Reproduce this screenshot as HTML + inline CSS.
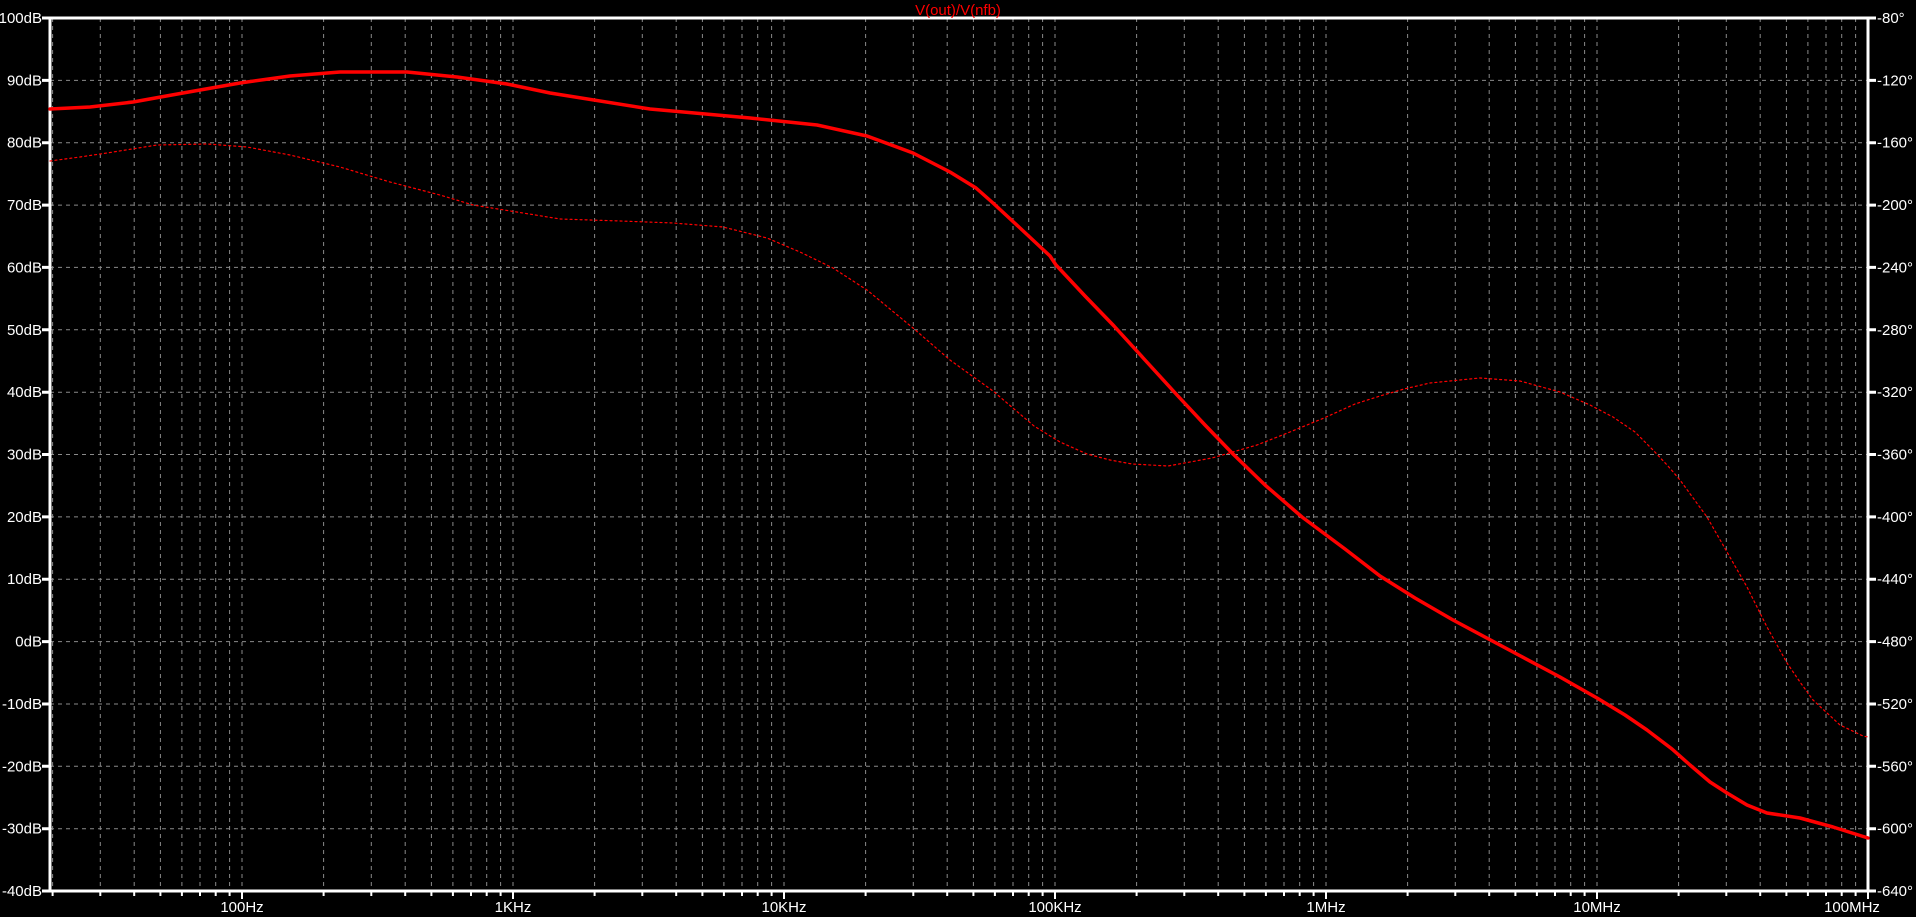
<!DOCTYPE html>
<html><head><meta charset="utf-8"><style>
html,body{margin:0;padding:0;background:#000;width:1916px;height:917px;overflow:hidden}
svg{display:block}
text{font-family:"Liberation Sans",Arial,sans-serif;font-size:15px;fill:#fff}
</style></head><body>
<svg width="1916" height="917" viewBox="0 0 1916 917">
<rect width="1916" height="917" fill="#000"/>
<g stroke="#8a8a8a" stroke-width="1" stroke-dasharray="4 4" fill="none">
<path d="M52.6 18V891M100.3 18V891M134.2 18V891M160.4 18V891M181.9 18V891M200 18V891M215.7 18V891M229.6 18V891M242 18V891
M323.6 18V891M371.3 18V891M405.2 18V891M431.4 18V891M452.9 18V891M471 18V891M486.7 18V891M500.6 18V891M513 18V891
M594.6 18V891M642.3 18V891M676.2 18V891M702.4 18V891M723.9 18V891M742 18V891M757.7 18V891M771.6 18V891M784 18V891
M865.6 18V891M913.3 18V891M947.2 18V891M973.4 18V891M994.9 18V891M1013 18V891M1028.7 18V891M1042.6 18V891M1055 18V891
M1136.6 18V891M1184.3 18V891M1218.2 18V891M1244.4 18V891M1265.9 18V891M1284 18V891M1299.7 18V891M1313.6 18V891M1326 18V891
M1407.6 18V891M1455.3 18V891M1489.2 18V891M1515.4 18V891M1536.9 18V891M1555 18V891M1570.7 18V891M1584.6 18V891M1597 18V891
M1678.6 18V891M1726.3 18V891M1760.2 18V891M1786.4 18V891M1807.9 18V891M1826 18V891M1841.7 18V891M1855.6 18V891
M50 80.4H1868M50 142.7H1868M50 205.1H1868M50 267.4H1868M50 329.8H1868M50 392.2H1868M50 454.5H1868M50 516.9H1868M50 579.2H1868M50 641.6H1868M50 704H1868M50 766.3H1868M50 828.7H1868"/>
</g>
<g stroke="#fff" stroke-width="3" fill="none">
<path d="M50 18H1868V891H50Z"/>
<path d="M42 18H50M42 80.4H50M42 142.7H50M42 205.1H50M42 267.4H50M42 329.8H50M42 392.2H50M42 454.5H50M42 516.9H50M42 579.2H50M42 641.6H50M42 704H50M42 766.3H50M42 828.7H50M42 891H50
M1868 18H1876M1868 80.4H1876M1868 142.7H1876M1868 205.1H1876M1868 267.4H1876M1868 329.8H1876M1868 392.2H1876M1868 454.5H1876M1868 516.9H1876M1868 579.2H1876M1868 641.6H1876M1868 704H1876M1868 766.3H1876M1868 828.7H1876M1868 891H1876"/>
<path stroke-width="2" d="M52.6 891v5M100.3 891v5M134.2 891v5M160.4 891v5M181.9 891v5M200 891v5M215.7 891v5M229.6 891v5M242 891v8
M323.6 891v5M371.3 891v5M405.2 891v5M431.4 891v5M452.9 891v5M471 891v5M486.7 891v5M500.6 891v5M513 891v8
M594.6 891v5M642.3 891v5M676.2 891v5M702.4 891v5M723.9 891v5M742 891v5M757.7 891v5M771.6 891v5M784 891v8
M865.6 891v5M913.3 891v5M947.2 891v5M973.4 891v5M994.9 891v5M1013 891v5M1028.7 891v5M1042.6 891v5M1055 891v8
M1136.6 891v5M1184.3 891v5M1218.2 891v5M1244.4 891v5M1265.9 891v5M1284 891v5M1299.7 891v5M1313.6 891v5M1326 891v8
M1407.6 891v5M1455.3 891v5M1489.2 891v5M1515.4 891v5M1536.9 891v5M1555 891v5M1570.7 891v5M1584.6 891v5M1597 891v8
M1678.6 891v5M1726.3 891v5M1760.2 891v5M1786.4 891v5M1807.9 891v5M1826 891v5M1841.7 891v5M1855.6 891v5M1868 891v8"/>
</g>
<g text-anchor="end">
<text x="42" y="23">100dB</text><text x="42" y="85.4">90dB</text><text x="42" y="147.7">80dB</text><text x="42" y="210.1">70dB</text><text x="42" y="272.4">60dB</text><text x="42" y="334.8">50dB</text><text x="42" y="397.2">40dB</text><text x="42" y="459.5">30dB</text><text x="42" y="521.9">20dB</text><text x="42" y="584.2">10dB</text><text x="42" y="646.6">0dB</text><text x="42" y="709">-10dB</text><text x="42" y="771.3">-20dB</text><text x="42" y="833.7">-30dB</text><text x="42" y="896">-40dB</text>
</g>
<g>
<text x="1877" y="23">-80°</text><text x="1877" y="85.4">-120°</text><text x="1877" y="147.7">-160°</text><text x="1877" y="210.1">-200°</text><text x="1877" y="272.4">-240°</text><text x="1877" y="334.8">-280°</text><text x="1877" y="397.2">-320°</text><text x="1877" y="459.5">-360°</text><text x="1877" y="521.9">-400°</text><text x="1877" y="584.2">-440°</text><text x="1877" y="646.6">-480°</text><text x="1877" y="709">-520°</text><text x="1877" y="771.3">-560°</text><text x="1877" y="833.7">-600°</text><text x="1877" y="896">-640°</text>
</g>
<g text-anchor="middle">
<text x="242" y="912">100Hz</text><text x="513" y="912">1KHz</text><text x="784" y="912">10KHz</text><text x="1055" y="912">100KHz</text><text x="1326" y="912">1MHz</text><text x="1597" y="912">10MHz</text><text x="1852" y="912">100MHz</text>
</g>
<text x="958" y="15" text-anchor="middle" style="fill:#ff0000;font-size:15px">V(out)/V(nfb)</text>
<g fill="none" stroke="#ff0000" stroke-linejoin="round" stroke-linecap="round">
<polyline stroke-width="3.5" points="50,109 90,107 133,102 183,93 240,83 290,76 340,72 407,72 457,77 507,84 550,93 650,109 750,118 817,125 867,136 913,153 950,172 976,188 993,203 1020,228 1050,256 1056,265 1085,296 1114,326 1145,360 1177,395 1205,425 1233,454 1265,485 1302,517 1345,549 1380,576 1415,598 1453,620 1513,652 1560,677 1597,698 1625,715 1647,730 1672,749 1690,765 1710,782 1727,793 1747,805 1767,813 1800,818 1833,827 1868,838"/>
<polyline stroke-width="1.2" stroke-dasharray="2 3" points="50,161 80,157 107,153 157,145 207,144 247,147 290,155 340,167 390,182 440,195 473,205 523,213 560,219 620,221 673,223 723,227 767,238 800,252 833,268 867,290 890,309 913,328 950,360 993,391 1034,426 1060,442 1087,454 1110,460 1132,464 1168,466 1212,458 1257,445 1290,432 1324,418 1355,404 1380,396 1404,389 1430,383 1480,378 1520,381 1560,392 1590,405 1613,417 1635,432 1653,450 1668,466 1680,480 1707,517 1727,552 1747,587 1767,627 1787,663 1800,682 1813,700 1840,725 1863,736 1868,737"/>
</g>
</svg>
</body></html>
